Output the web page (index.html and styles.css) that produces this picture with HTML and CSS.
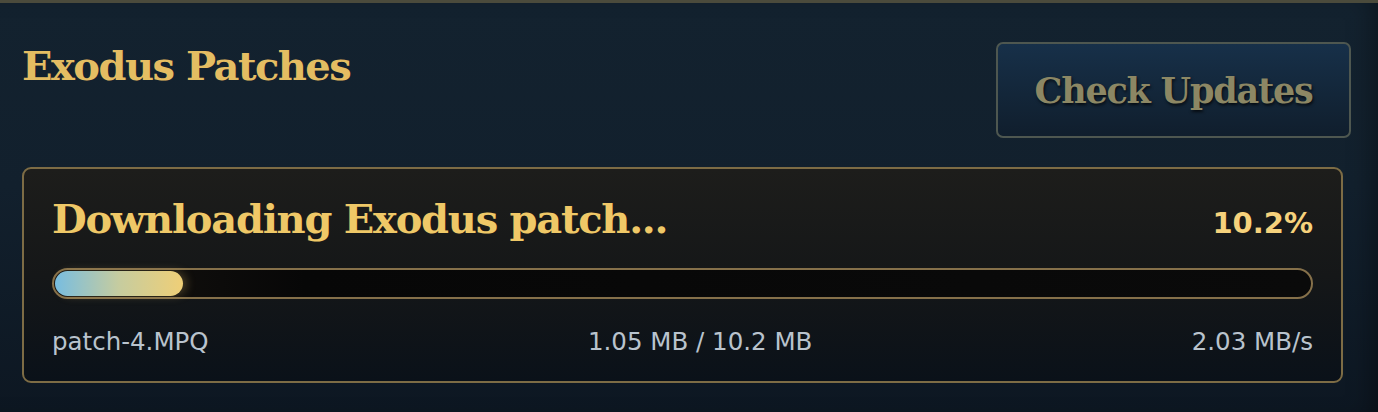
FILE: index.html
```html
<!DOCTYPE html>
<html lang="en">
<head>
  <meta charset="UTF-8">
  <meta name="viewport" content="width=device-width, initial-scale=1.0">
  <title>Exodus Patches</title>
  <link rel="stylesheet" href="styles.css">
</head>
<body>
  <div class="panel">
    <div class="panel-head">
      <h2 class="panel-title">Exodus Patches</h2>
      <button class="btn-check">Check Updates</button>
    </div>
    <div class="download">
      <div class="download-top">
        <h3 class="download-title">Downloading Exodus patch...</h3>
        <span class="download-pct">10.2%</span>
      </div>
      <div class="bar">
        <div class="bar-fill" style="width: 10.2%"></div>
      </div>
      <div class="download-info">
        <span>patch-4.MPQ</span>
        <span>1.05 MB / 10.2 MB</span>
        <span>2.03 MB/s</span>
      </div>
    </div>
  </div>
</body>
</html>
```

FILE: styles.css
```css
* {
  margin: 0;
  padding: 0;
  box-sizing: border-box;
}
:root {
  --gold: #efc867;
  --gold-line: #7d6c45;
  --muted: #b9c3cd;
}
body {
  width: 1378px;
  height: 412px;
  overflow: hidden;
  background: #0f1b27;
  font-family: "DejaVu Sans", Verdana, sans-serif;
}
/* 外层面板，上方一条暗金色边 */
.panel {
  height: 412px;
  border-top: 3px solid #4b4b3c;
  background: linear-gradient(180deg, #13222f 0%, #12202d 45%, #0d1722 100%);
  box-shadow: inset -18px 0 24px -12px rgba(0, 0, 0, 0.35);
  padding: 39px 27px 0 22px;
}
.panel-head {
  display: flex;
  justify-content: space-between;
  align-items: flex-start;
}
.panel-title {
  font-family: "DejaVu Serif", Georgia, serif;
  font-weight: bold;
  font-size: 40px;
  line-height: 46px;
  color: #e4bd62;
  margin-top: 1px;
  letter-spacing: -1.5px;
}
.btn-check {
  width: 355px;
  height: 96px;
  border: 2px solid #4e5750;
  border-radius: 7px;
  background: linear-gradient(180deg, #173049 0%, #132639 55%, #101e2d 100%);
  font-family: "DejaVu Serif", Georgia, serif;
  font-weight: bold;
  font-size: 35px;
  color: #8c8764;
  text-shadow: 1px 2px 3px rgba(0, 0, 0, 0.7);
  letter-spacing: -1.2px;
}
/* 下载卡片 */
.download {
  margin-top: 29px;
  margin-right: 8px;
  height: 216px;
  border: 2px solid var(--gold-line);
  border-radius: 9px;
  background: linear-gradient(180deg, #1d1d1b 0%, #151718 50%, #0a1119 100%);
  padding: 27px 28px 0 28px;
}
.download-top {
  display: flex;
  justify-content: space-between;
  align-items: baseline;
  line-height: 46px;
}
.download-title {
  font-family: "DejaVu Serif", Georgia, serif;
  font-weight: bold;
  font-size: 40px;
  color: var(--gold);
  letter-spacing: -1.25px;
}
.download-pct {
  font-weight: bold;
  font-size: 29px;
  color: #f6d27c;
}
/* 进度条 */
.bar {
  margin-top: 22px;
  height: 31px;
  border: 2px solid #85704a;
  border-radius: 16px;
  background: linear-gradient(90deg, #161310 0%, #070707 20%, #0a0a0a 100%);
  padding: 1px;
}
.bar-fill {
  height: 100%;
  border-radius: 13px;
  background: linear-gradient(90deg, #78bde0 0%, #c6cc9f 50%, #efcf77 100%);
  box-shadow: 4px 0 10px rgba(232, 196, 110, 0.25);
}
.download-info {
  margin-top: 28px;
  display: flex;
  justify-content: space-between;
  font-size: 24.5px;
  color: var(--muted);
}
```
